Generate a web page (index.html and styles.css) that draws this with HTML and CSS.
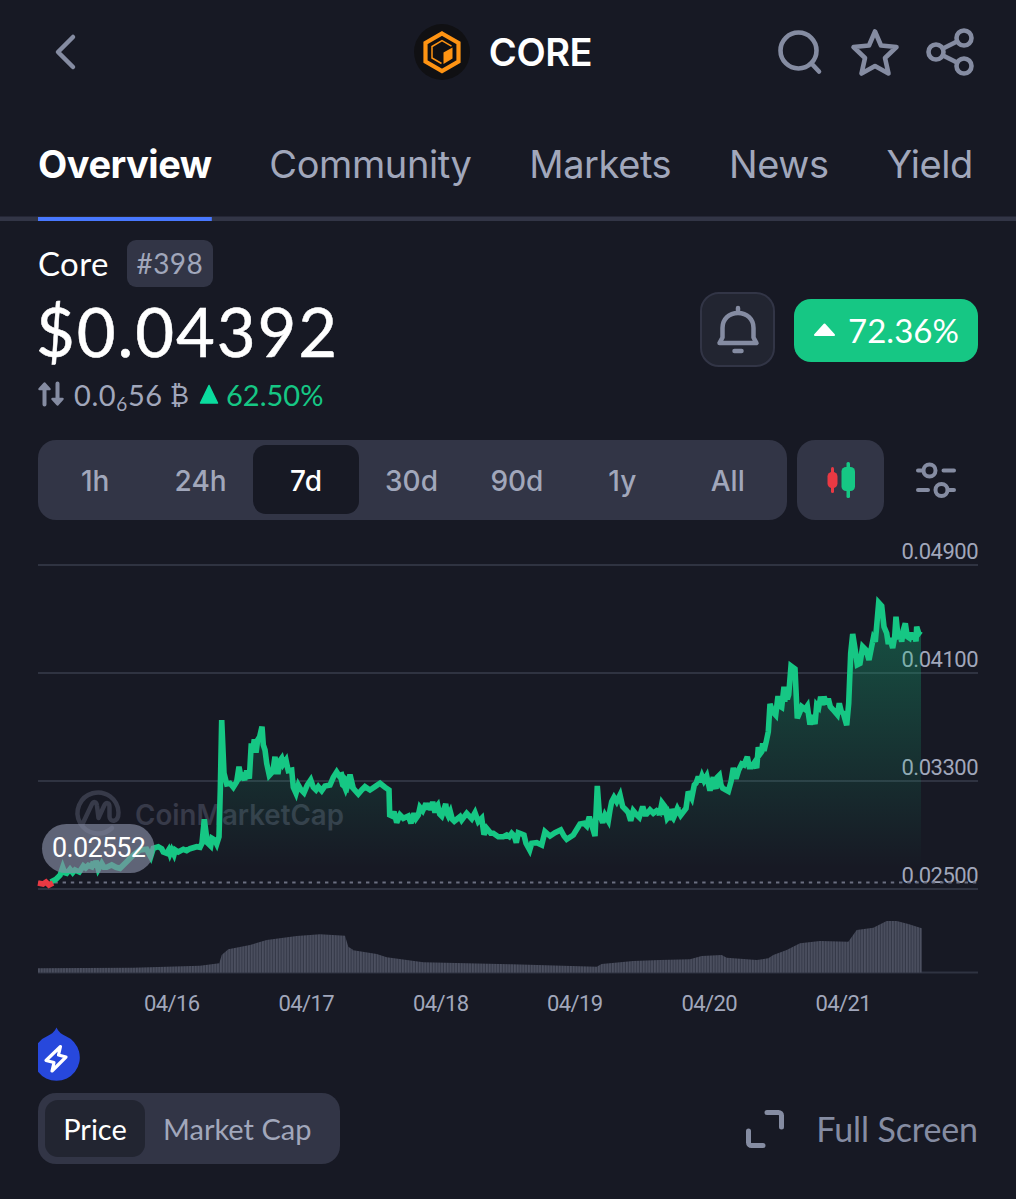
FILE: index.html
```html
<!DOCTYPE html>
<html lang="en">
<head>
<meta charset="utf-8">
<title>CORE</title>
<link rel="stylesheet" href="styles.css">
</head>
<body>
<header class="topbar">
  <svg class="back" viewBox="0 0 24 38"><path d="M20 4 5 19l15 15"/></svg>
  <div class="coin">
    <svg class="coin-logo" viewBox="0 0 56 56">
      <circle cx="28" cy="28" r="28" fill="#101013"/>
      <path d="M28 9.500 44.500 19v18.500L28 47 11.500 37.500V19z" fill="none" stroke="#ff9413" stroke-width="4.200"/>
      <path d="M27.500 39.500 18 34V22.500l10-5.800 9.500 5.500" fill="none" stroke="#ff9413" stroke-width="1.500"/>
      <path d="M29.500 28.500 38.500 23.500V34.500L29.500 40z" fill="#ff9413"/>
    </svg>
    <h1 class="coin-symbol">CORE</h1>
  </div>
  <div class="actions">
    <svg viewBox="0 0 50 50"><circle cx="23.500" cy="23.500" r="18"/><path d="M36.500 36.500 44 44.500"/></svg>
    <svg viewBox="0 0 50 50"><path d="m25 4.500 6 14 15.500 1.500-11.500 11 3.500 15.500-13.500-7.500-13.500 7.500L15 31 3.500 20 19 18.500z"/></svg>
    <svg viewBox="0 0 50 50"><circle cx="11" cy="25" r="7.500"/><circle cx="39" cy="11" r="7.500"/><circle cx="39" cy="39" r="7.500"/><path d="m18 21.500 14-7M18 28.500l14 7"/></svg>
  </div>
</header>

<nav class="tabs">
  <a class="tab tab-active">Overview</a>
  <a class="tab">Community</a>
  <a class="tab">Markets</a>
  <a class="tab">News</a>
  <a class="tab">Yield</a>
</nav>

<section class="summary">
  <div class="quote">
    <div class="name-row"><span class="name">Core</span><span class="rank">#398</span></div>
    <div class="price">$0.04392</div>
    <div class="btc-row">
      <svg class="swap" viewBox="0 0 28 26"><path d="M6.500 23.500V8M19.500 2.500V18"/><path class="head" d="M6.500 2.500 11.500 8h-10zM19.500 23.500l5-5.500h-10z"/></svg>
      <span class="btc">0.0<span class="sub">6</span>56</span><span class="btc-sign">₿</span>
      <svg class="up" viewBox="0 0 20 20"><path d="M10 1.500 18.500 19h-17z"/></svg>
      <span class="btc-change">62.50%</span>
    </div>
  </div>
  <div class="quote-side">
    <div class="bell">
      <svg viewBox="0 0 44 50"><path d="M22 3v5M6.500 32.500V23c0-9 6.500-15 15.500-15s15.500 6 15.500 15v9.500l3 5.500H3.500zM18.500 46h7"/></svg>
    </div>
    <div class="change"><svg viewBox="0 0 22 14"><path d="M11 1.500 20.500 12h-19z"/></svg><span>72.36%</span></div>
  </div>
</section>

<section class="controls">
  <div class="ranges">
    <span class="range">1h</span><span class="range">24h</span><span class="range range-active">7d</span><span class="range">30d</span><span class="range">90d</span><span class="range">1y</span><span class="range">All</span>
  </div>
  <div class="candles">
    <svg viewBox="0 0 30 36"><g fill="#ea3943"><rect x="5" y="5" width="3" height="26" rx="1.500"/><rect x="1.500" y="10" width="10" height="16" rx="4.500"/></g><g fill="#16c784"><rect x="20.500" y="0" width="3.500" height="36" rx="1.500"/><rect x="15.500" y="5" width="13.500" height="24" rx="4.500"/></g></svg>
  </div>
  <svg class="sliders" viewBox="0 0 40 38"><circle cx="13.500" cy="9.500" r="6"/><circle cx="25.500" cy="29" r="6"/><path d="M2 9.500h5M27.500 9.500H38M2 29h10M32 29h6"/></svg>
</section>

<svg class="chart" viewBox="0 530 1016 490">
  <defs>
    <linearGradient id="fade" gradientUnits="userSpaceOnUse" x1="0" y1="602" x2="0" y2="868">
      <stop offset="0" stop-color="#16c784" stop-opacity=".34"/>
      <stop offset="1" stop-color="#16c784" stop-opacity="0"/>
    </linearGradient>
    <pattern id="bars" patternUnits="userSpaceOnUse" x="38" y="0" width="2.800" height="10">
      <rect width="2.800" height="10" fill="#343847"/>
      <rect width="1.700" height="10" fill="#4c5060"/>
    </pattern>
  </defs>
  <g class="grid"><path d="M38 565H978M38 673H978M38 781H978M38 889H978M38 972.500H978"/></g>
  <g class="watermark">
    <path class="mark" d="M112 828A20.500 20.500 0 1 1 118.500 812.500C118.500 823 109.500 822.500 109.500 816.500V807c0-5-3.500-5-5.500-1l-5.500 12-1.500-12c-.5-5-3.500-5-5.500-1L82.500 824"/>
    <text x="135" y="825" textLength="209" lengthAdjust="spacingAndGlyphs">CoinMarketCap</text>
  </g>
  <g class="ylabels">
    <text x="901.500" y="558.500" textLength="77">0.04900</text>
    <text x="901.500" y="666.500" textLength="77">0.04100</text>
    <text x="901.500" y="774.500" textLength="77">0.03300</text>
    <text x="901.500" y="882.500" textLength="77">0.02500</text>
  </g>
  <path class="open-line" d="M38 882.500H978"/>
  <path id="area" fill="url(#fade)"/>
  <path id="volume" fill="url(#bars)"/>
  <path id="line" class="line"/>
  <path class="line line-down" d="M38 883l5 1 3-2 3 3 4-2"/>
  <rect x="42" y="824" width="112.500" height="49" rx="24.500" class="pill"/>
  <text x="52" y="857" textLength="94" class="pill-text">0.02552</text>
  <g class="dates">
    <text x="144" y="1011" textLength="56">04/16</text>
    <text x="278.500" y="1011" textLength="56">04/17</text>
    <text x="413" y="1011" textLength="56">04/18</text>
    <text x="547" y="1011" textLength="56">04/19</text>
    <text x="681.500" y="1011" textLength="56">04/20</text>
    <text x="815.500" y="1011" textLength="56">04/21</text>
  </g>
</svg>

<svg class="event" viewBox="0 0 43 55">
  <path d="M18.500 .5c2.500 5 5 6.500 9 8.500A23.300 23.300 0 1 1 9.500 9C13.500 7 16 5.500 18.500 .5z" fill="#2748dc"/>
  <path d="M22.500 19.500 8 33.500l8 2-2 8.500 14-14-7.500-2z" fill="none" stroke="#fff" stroke-width="3.200" stroke-linejoin="round"/>
</svg>

<footer class="bottom">
  <div class="toggle"><span class="option option-active">Price</span><span class="option">Market Cap</span></div>
  <div class="full">
    <svg viewBox="0 0 38 38"><path d="M21 2.500h11.500a3 3 0 0 1 3 3V17M2.500 21v11.500a3 3 0 0 0 3 3H17"/></svg>
    <span>Full Screen</span>
  </div>
</footer>
<script src="chart.js"></script>
</body>
</html>
```
FILE: styles.css
```css
* { box-sizing: border-box; }
body {
  margin: 0;
  width: 1016px;
  height: 1199px;
  overflow: hidden;
  background: #171924;
  color: #fff;
  font-family: Inter, sans-serif;
  display: flex;
  flex-direction: column;
}
svg { display: block; flex: none; }

.topbar {
  height: 104px;
  display: grid;
  grid-template-columns: 1fr auto 1fr;
  align-items: center;
  padding: 0 41px 0 53px;
}
.back { width: 24px; height: 38px; fill: none; stroke: #858ca2; stroke-width: 4.5; stroke-linecap: round; stroke-linejoin: round; }
.coin { display: flex; align-items: center; gap: 19px; margin-left: -11px; margin-right: 11px; }
.coin-logo { width: 56px; height: 56px; }
.coin-symbol { margin: 0; font-size: 38px; font-weight: 600; line-height: 46px; letter-spacing: -0.4px; }
.actions { display: flex; justify-content: flex-end; gap: 25px; }
.actions svg { width: 50px; height: 50px; fill: none; stroke: #858ca2; stroke-width: 4.6; stroke-linecap: round; stroke-linejoin: round; }

.tabs {
  height: 117px;
  padding: 0 43px 0 38px;
  display: flex;
  justify-content: space-between;
  box-shadow: inset 0 -4.5px #323546;
}
.tab { font-size: 38px; letter-spacing: -0.4px; color: #a1a7bb; line-height: 46px; height: 117px; padding-top: 37px; }
.tab-active { color: #fff; font-weight: 700; letter-spacing: -0.5px; background: linear-gradient(#4878ff, #4878ff) bottom / 100% 4.5px no-repeat; }

.summary { height: 219px; padding: 19px 38px 0; display: flex; justify-content: space-between; font-family: Lato, sans-serif; }
.name-row { display: flex; align-items: center; gap: 18px; height: 47px; }
.name { font-size: 33px; letter-spacing: 0.4px; line-height: 40px; padding-bottom: 2px; }
.rank { width: 86px; height: 47px; border-radius: 9px; background: #323546; color: #a1a7bb; font-size: 28px; letter-spacing: 0.4px; line-height: 47px; text-align: center; }
.price { font-size: 67px; line-height: 80px; height: 84px; padding-top: 4px; letter-spacing: 1.9px; margin-left: -2px; -webkit-text-stroke: 0.5px #fff; }
.btc-row { display: flex; align-items: center; height: 48px; font-size: 29px; color: #a1a7bb; line-height: 40px; }
.swap { width: 28px; height: 26px; margin: 0 8px 3px 0; fill: none; stroke: #858ca2; stroke-width: 4; stroke-linecap: round; stroke-linejoin: round; }
.swap .head { fill: #858ca2; stroke-width: 2.5; }
.btc { letter-spacing: 0.6px; height: 40px; }
.sub { font-size: 19px; line-height: 0; position: relative; top: 5px; }
.btc-sign { font-family: "DejaVu Sans", sans-serif; font-size: 26px; margin-left: 7px; }
.up { width: 20px; height: 20px; margin: 0 7px 3px 10px; fill: #0bdc9f; stroke: #0bdc9f; stroke-width: 1.5; stroke-linejoin: round; }
.btc-change { color: #16c784; }
.quote-side { display: flex; align-items: center; gap: 19px; height: 75px; margin-top: 52px; }
.bell { width: 75px; height: 75px; border: 2.5px solid #323546; border-radius: 19px; background: #222531; display: flex; align-items: center; justify-content: center; }
.bell svg { width: 44px; height: 50px; fill: none; stroke: #858ca2; stroke-width: 4.5; stroke-linecap: round; stroke-linejoin: round; }
.change { width: 184px; height: 63px; margin-top: 1px; border-radius: 17px; background: #16c784; display: flex; align-items: center; justify-content: center; gap: 12px; font-size: 33px; }
.change svg { width: 23px; height: 14px; fill: #fff; stroke: #fff; stroke-width: 2; stroke-linejoin: round; }

.controls { height: 90px; padding: 0 60px 10px 38px; display: flex; align-items: center; }
.ranges { width: 749px; height: 80px; padding: 5px 6.5px 6px 4.5px; display: flex; border-radius: 18px; background: #323546; }
.range { flex: 1; height: 69px; line-height: 72px; text-align: center; font-size: 28px; font-weight: 500; color: #a1a7bb; }
.range-active { color: #fff; background: #171924; border-radius: 13px; }
.candles { width: 87px; height: 80px; margin-left: 10px; border-radius: 18px; background: #323546; display: flex; align-items: center; justify-content: center; }
.candles svg { width: 30px; height: 36px; }
.sliders { width: 40px; height: 38px; margin-left: 32px; fill: none; stroke: #858ca2; stroke-width: 4; stroke-linecap: round; }

.chart { width: 1016px; height: 490px; font-family: Roboto, sans-serif; }
.grid { stroke: #2f3341; stroke-width: 2; }
.watermark { fill: #373a49; font: 600 28px Inter, sans-serif; }
.mark { fill: none; stroke: #373a49; stroke-width: 4.5; stroke-linecap: round; stroke-linejoin: round; }
.ylabels, .dates { fill: #a1a7bb; font-size: 22px; }
.open-line { stroke: #6b6f80; stroke-width: 2; stroke-dasharray: 3.4 4.8; }
.line { fill: none; stroke: #16c784; stroke-width: 5.6; stroke-linejoin: miter; stroke-miterlimit: 3; }
.line-down { stroke: #ea3943; }
.pill { fill: #858ca2; fill-opacity: .66; }
.pill-text { fill: #fff; font-size: 27px; }

.event { width: 43px; height: 55px; margin: 7px 0 0 38px; }
.bottom { height: 71px; margin-top: 11px; padding: 0 38px; display: flex; justify-content: space-between; font-family: Lato, sans-serif; }
.toggle { width: 302px; height: 71px; padding: 7px; border-radius: 18px; background: #323546; display: flex; align-items: center; }
.option { font-size: 29px; line-height: 57px; height: 57px; color: #a1a7bb; flex: 1; padding-left: 18px; }
.option-active { flex: none; width: 100px; padding-left: 0; text-align: center; color: #fff; background: #222531; border-radius: 13px; }
.full { display: flex; align-items: center; gap: 32px; color: #858ca2; font-size: 34px; letter-spacing: -0.1px; }
.full svg { width: 38px; height: 38px; fill: none; stroke: #858ca2; stroke-width: 5; stroke-linecap: round; }
```
FILE: chart.js
```js
// Each segment has an origin in chart units; its samples are x,y pairs in thirds of a unit.
const price = [
  [20, 690, "92,576 108,568 120,556 128,532 134,548 140,550 150,538 158,548 165,540 178,546 190,528 197,534 205,526 215,530 220,516 224,532 228,512 235,538 245,520 252,532 260,532 275,525 288,532 300,535 320,515 340,495 360,480 380,478 392,500 400,475 415,470 425,476 430,486 440,490 446,480 450,492 455,480 462,494 466,480 475,486 490,478 500,482 510,476 530,470 540,472 546,460 553,388 562,458 572,468 576,445 584,450 590,462 597,440 601,300 605,90 612,250 620,282 630,280 640,292 650,275 657,230 663,262 668,258 674,270 680,242 688,266 694,160 698,185 703,148 708,188 713,150 719,140 726,110 730,165 735,180 740,220 748,256 755,248 760,235 765,200 770,245 775,245 780,212 785,205 790,222 798,210 803,235 805,242 815,240 820,292 828,310 835,285 842,298 852,308 862,285 872,270 880,292 888,300 895,290 905,302 915,288 930,285 940,262 950,246 958,258 965,255 972,285 977,298 984,280 990,254 1000,295"],
  [340, 750, "0,70 8,105 20,115 30,75 40,115 55,132 65,120 75,110 90,120 105,110 120,100 135,112 147,120 149,195 156,198 162,185 170,218 180,195 190,205 205,198 213,220 222,190 228,205 235,195 240,172 248,182 258,160 262,178 268,160 273,180 278,155 285,188 289,170 293,165 299,192 305,198 317,162 321,190 325,198 331,185 337,208 343,214 360,200 365,210 380,190 395,206 405,188 415,215 425,205 432,254 440,235 452,250 460,250 475,260 490,260 500,255 508,260 515,250 523,258 529,278 535,248 545,252 552,255 558,280 569,300 575,280 590,278 605,285 615,245 630,258 645,248 662,240 672,258 680,268 700,255 720,222 732,220 740,228 748,200 756,228 765,258 772,108 778,190 788,218 795,195 805,212 810,180 815,155 822,142 830,155 840,135 848,170 858,180 865,188 872,212 880,182 888,192 898,202 908,170 915,192 920,192 930,180 940,190 950,182 960,188 967,158 974,182 980,180 985,208 992,195 1000,205 1010,182"],
  [660, 570, "0,728 6,698 15,710 22,745 30,735 40,745 52,716 62,736 78,715 85,665 95,684 103,645 108,640 115,620 120,636 126,618 132,632 140,618 145,640 150,662 155,640 160,622 164,645 168,656 172,622 178,616 183,645 188,655 205,664 213,635 220,594 228,626 236,600 245,582 252,585 262,560 268,590 275,590 283,578 290,594 295,532 300,552 305,545 308,520 312,542 318,518 325,485 330,402 338,425 347,435 354,378 359,408 365,412 372,350 374,395 378,352 382,388 386,374 393,288 405,297 412,445 420,425 425,410 435,418 442,408 450,464 455,436 460,448 465,462 470,405 476,412 482,380 488,405 492,380 500,402 505,386 511,410 518,418 532,434 538,400 544,425 550,430 560,466 566,400 572,250 578,192 584,230 592,284 600,280 608,230 618,240 627,270 640,205 646,215 656,98 665,108 672,170 680,190 685,222 690,205 698,234 704,200 708,140 715,208 720,190 725,215 730,180 736,160 742,200 748,204 752,188 758,208 762,190 768,214 770,170 776,190 783,195"]
];
const volume = [
  [20, 690, "54,835 340,833 540,827 598,820 605,795 625,778 690,765 740,750 830,738 900,733 975,737 985,770 1000,780"],
  [340, 750, "35,600 110,612 140,622 250,637 515,643 770,650 785,642 880,633"],
  [660, 570, "0,1170 90,1168 125,1158 185,1155 200,1163 290,1170 325,1165 340,1155 380,1140 420,1120 480,1113 565,1115 590,1080 640,1073 680,1053 710,1053 745,1062 785,1075"]
];

function toPath(segments) {
  const points = segments.flatMap(([ox, oy, data]) => data.split(" ").map(pair => {
    const [x, y] = pair.split(",").map(Number);
    return (ox + x / 3).toFixed(1) + " " + (oy + y / 3).toFixed(1);
  }));
  return "M" + points.join("L");
}

const line = toPath(price);
document.getElementById("line").setAttribute("d", line);
document.getElementById("area").setAttribute("d", line + "V883H50Z");
document.getElementById("volume").setAttribute("d", toPath(volume) + "V972.5H38Z");
```
